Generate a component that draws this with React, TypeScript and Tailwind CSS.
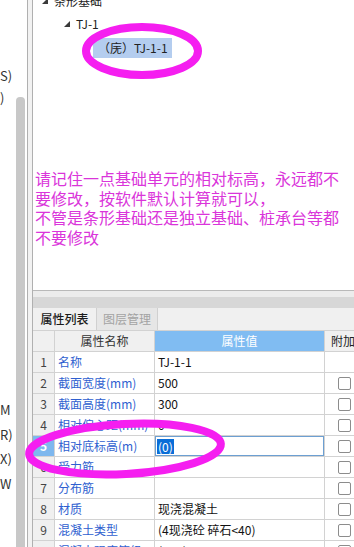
import React from "react";

const Tri: React.FC = () => (
    <svg width="6" height="6" viewBox="0 0 6 6" className="shrink-0">
        <polygon points="6,0 6,6 0,6" fill="#3a3a3a" />
    </svg>
);

const Check: React.FC = () => (
    <div className="w-[13px] h-[13px] border border-[#8c8c8c] rounded-[2px] bg-white" />
);

type Row = { n: number; name: string; value: string; box: boolean };

const rows: Row[] = [
    { n: 1, name: "名称", value: "TJ-1-1", box: false },
    { n: 2, name: "截面宽度(mm)", value: "500", box: true },
    { n: 3, name: "截面高度(mm)", value: "300", box: true },
    { n: 4, name: "相对偏心距(mm)", value: "0", box: true },
    { n: 5, name: "相对底标高(m)", value: "(0)", box: true },
    { n: 6, name: "受力筋", value: "", box: true },
    { n: 7, name: "分布筋", value: "", box: true },
    { n: 8, name: "材质", value: "现浇混凝土", box: true },
    { n: 9, name: "混凝土类型", value: "(4现浇砼 碎石<40)", box: true },
    { n: 10, name: "混凝土强度等级", value: "(C20)", box: true },
];

const App: React.FC = () => {
    return (
        <div className="relative w-[354px] h-[547px] overflow-hidden bg-white flex font-['Noto_Sans_CJK_SC',sans-serif] text-[12px] text-[#222]">
            {/* cut off left panel */}
            <div className="w-[16px] shrink-0 overflow-hidden leading-[16px] text-[13px] text-[#333] whitespace-nowrap">
                <div className="mt-[68px]">S)</div>
                <div className="mt-[6px]">)</div>
                <div className="mt-[296px]">M</div>
                <div className="mt-[9px]">R)</div>
                <div className="mt-[8px]">X)</div>
                <div className="mt-[9px]">W</div>
            </div>
            <div className="w-[9px] shrink-0 pt-[97px]">
                <div className="h-full bg-[#c8c8c8] rounded-t-[4px]" />
            </div>
            <div className="w-[2px] shrink-0" />
            <div className="w-[1px] shrink-0 bg-[#b0b0b0]" />
            <div className="w-[4px] shrink-0 bg-[#f2f2f2]" />

            <div className="flex-1 flex flex-col border-l border-[#b0b0b0] min-w-0">
                {/* tree */}
                <div className="h-[291px] shrink-0 border-b border-[#b9b9b9] bg-white">
                    <div className="mt-[-9px] h-[20px] flex items-center pl-[9px] gap-[6px]">
                        <Tri />
                        <span>条形基础</span>
                    </div>
                    <div className="mt-[3px] h-[20px] flex items-center pl-[31px] gap-[6px]">
                        <Tri />
                        <span>TJ-1</span>
                    </div>
                    <div className="mt-[4px] pl-[60px]">
                        <div className="w-[79px] h-[20px] bg-[#b4cdef] flex items-center pl-[5px] whitespace-nowrap">
                            （庑）TJ-1-1
                        </div>
                    </div>
                    <div className="mt-[111px] pl-[2px] pr-[10px] text-[16px] leading-[19.7px] text-[#da35da]">
                        请记住一点基础单元的相对标高，永远都不要修改，按软件默认计算就可以，
                        <br />
                        不管是条形基础还是独立基础、桩承台等都不要修改
                    </div>
                </div>
                <div className="h-[6px] shrink-0 bg-[#ececec]" />
                <div className="h-[11px] shrink-0 bg-[#d7d7d7]" />
                <div className="h-[22px] shrink-0 bg-[#f0f0f0] flex">
                    <div className="w-[64px] flex items-center justify-center font-medium text-[#1a1a1a] border-r border-[#d0d0d0]">
                        属性列表
                    </div>
                    <div className="w-[61px] flex items-center justify-center bg-[#e6e6e6] text-[#a3a3a3] border-r border-[#d0d0d0]">
                        图层管理
                    </div>
                </div>

                {/* table */}
                <div className="grid grid-cols-[22px_100px_170px_1fr] h-[22px] shrink-0 border-t border-[#d2d2d2]">
                    <div className="bg-[#f0f0f0] border-r border-b border-[#d2d2d2]" />
                    <div className="bg-[#f0f0f0] border-r border-b border-[#d2d2d2] flex items-center justify-center text-[#333]">
                        属性名称
                    </div>
                    <div className="bg-[#80bcf2] border-r border-b border-[#d2d2d2] flex items-center justify-center text-white">
                        属性值
                    </div>
                    <div className="bg-[#f0f0f0] border-b border-[#d2d2d2] flex items-center pl-[6px] whitespace-nowrap overflow-hidden">
                        附加
                    </div>
                </div>
                {rows.map((r) => {
                    const sel = r.n === 5;
                    return (
                        <div key={r.n} className="grid grid-cols-[22px_100px_170px_1fr] h-[21px] shrink-0">
                            <div
                                className={
                                    sel
                                        ? "bg-[#7db7ee] text-white font-bold border-r border-b border-[#d2d2d2] flex items-center justify-center"
                                        : "bg-[#f0f0f0] text-[#444] border-r border-b border-[#d2d2d2] flex items-center justify-center"
                                }
                            >
                                {r.n}
                            </div>
                            <div className="border-r border-b border-[#d2d2d2] flex items-center pl-[3px] text-[#2f5fd0] whitespace-nowrap overflow-hidden">
                                {r.name}
                            </div>
                            {sel ? (
                                <div className="border-b border-[#d2d2d2] flex">
                                    <div className="flex-1 border-[1.5px] border-[#6c9fd2] flex items-center pl-[1px]">
                                        <span className="bg-[#0a6ed8] text-white leading-[15px] px-[1px]">{r.value}</span>
                                    </div>
                                    <div className="w-[1px] bg-[#d2d2d2]" />
                                </div>
                            ) : (
                                <div className="border-r border-b border-[#d2d2d2] flex items-center pl-[3px] text-[#111] whitespace-nowrap overflow-hidden">
                                    {r.value}
                                </div>
                            )}
                            <div className="border-b border-[#d2d2d2] flex items-center pl-[13px]">
                                {r.box && <Check />}
                            </div>
                        </div>
                    );
                })}
            </div>

            {/* annotation marks */}
            <svg className="absolute left-0 top-0 pointer-events-none" width="354" height="547">
                <ellipse cx="142" cy="51" rx="56" ry="24" fill="none" stroke="#f51ef0" strokeWidth="8" />
                <ellipse
                    cx="125"
                    cy="449"
                    rx="96"
                    ry="25"
                    fill="none"
                    stroke="#f51ef0"
                    strokeWidth="8"
                    transform="rotate(-3 125 449)"
                />
            </svg>
        </div>
    );
};

export default App;
